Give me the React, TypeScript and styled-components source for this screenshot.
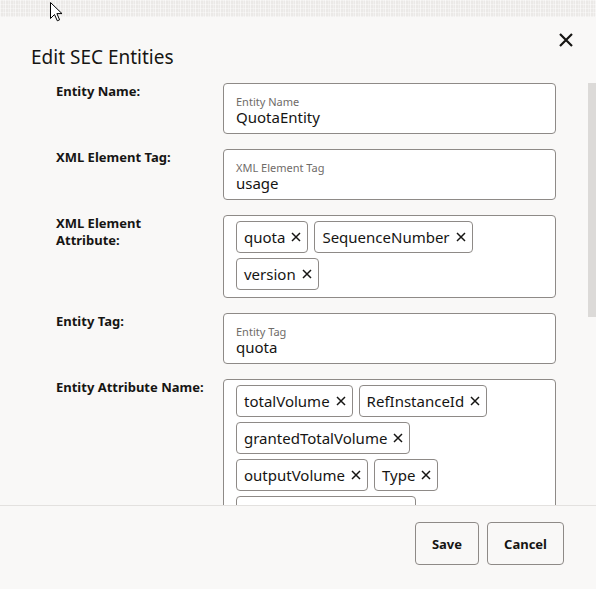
import React from 'react'
import styled, { createGlobalStyle } from 'styled-components'

const GlobalStyle = createGlobalStyle`
  html, body {
    margin: 0;
    padding: 0;
    background: #f9f8f7;
    font-family: "Noto Sans", "Open Sans", sans-serif;
    color: #161513;
  }
`

type Field =
  | { kind: 'text'; label: string; hint: string; value: string }
  | { kind: 'chips'; label: string; chips: string[] }

const fields: Field[] = [
  { kind: 'text', label: 'Entity Name:', hint: 'Entity Name', value: 'QuotaEntity' },
  { kind: 'text', label: 'XML Element Tag:', hint: 'XML Element Tag', value: 'usage' },
  { kind: 'chips', label: 'XML Element Attribute:', chips: ['quota', 'SequenceNumber', 'version'] },
  { kind: 'text', label: 'Entity Tag:', hint: 'Entity Tag', value: 'quota' },
  {
    kind: 'chips',
    label: 'Entity Attribute Name:',
    chips: ['totalVolume', 'RefInstanceId', 'grantedTotalVolume', 'outputVolume', 'Type', 'reservedTotalVolume'],
  },
]

// visible part of the scroll area vs. its full content height
const VIEW_HEIGHT = 422
const CONTENT_HEIGHT = 761

const CloseIcon = () => (
  <svg width="16" height="16" viewBox="0 0 16 16">
    <path d="M2 2 L14 14 M14 2 L2 14" stroke="#161513" strokeWidth="2.2" />
  </svg>
)

const SmallX = () => (
  <svg width="10" height="10" viewBox="0 0 10 10">
    <path d="M1 1 L9 9 M9 1 L1 9" stroke="#161513" strokeWidth="1.5" />
  </svg>
)

const Pointer = () => (
  <svg width="13" height="20" viewBox="0 0 13 20">
    <path
      d="M0.5 0.5 L0.5 16.5 L4.5 12.5 L7.3 18.8 L9.6 17.8 L6.9 11.6 L12 11.6 Z"
      fill="#ffffff"
      stroke="#000000"
      strokeWidth="1"
      strokeLinejoin="round"
    />
  </svg>
)

const App = () => {
  const thumb = Math.round((VIEW_HEIGHT * VIEW_HEIGHT) / CONTENT_HEIGHT)
  return (
    <Page>
      <GlobalStyle />
      <Backdrop>
        <CursorSpot>
          <Pointer />
        </CursorSpot>
      </Backdrop>
      <Dialog>
        <Header>
          <Title>Edit SEC Entities</Title>
          <CloseButton aria-label="Close">
            <CloseIcon />
          </CloseButton>
        </Header>
        <BodyFrame>
          <Body>
            <FormGrid>
              {fields.map((f) => (
                <React.Fragment key={f.label}>
                  <Label>{f.label}</Label>
                  {f.kind === 'text' ? (
                    <InputBox>
                      <Hint>{f.hint}</Hint>
                      <Value>{f.value}</Value>
                    </InputBox>
                  ) : (
                    <ChipBox>
                      {f.chips.map((c) => (
                        <Chip key={c}>
                          <span>{c}</span>
                          <SmallX />
                        </Chip>
                      ))}
                    </ChipBox>
                  )}
                </React.Fragment>
              ))}
            </FormGrid>
          </Body>
          <ScrollThumb style={{ height: thumb }} />
        </BodyFrame>
        <Footer>
          <FooterButton>Save</FooterButton>
          <FooterButton>Cancel</FooterButton>
        </Footer>
      </Dialog>
    </Page>
  )
}

export default App

const Page = styled.div`
  height: 589px;
  display: flex;
  flex-direction: column;
  overflow: hidden;
`

const Backdrop = styled.div`
  position: relative;
  height: 17px;
  flex: 0 0 17px;
  background-color: #ebe9e7;
  background-image: repeating-linear-gradient(
      90deg,
      rgba(255, 255, 255, 0.55) 0 1px,
      transparent 1px 3px,
      rgba(255, 255, 255, 0.3) 3px 4px,
      transparent 4px 5px
    ),
    repeating-linear-gradient(0deg, rgba(255, 255, 255, 0.35) 0 1px, transparent 1px 4px);
`

const CursorSpot = styled.div`
  position: absolute;
  left: 50px;
  top: 2px;
  line-height: 0;
`

const Dialog = styled.div`
  flex: 1;
  display: flex;
  flex-direction: column;
  min-height: 0;
  background: #f9f8f7;
`

const Header = styled.div`
  flex: 0 0 66px;
  box-sizing: border-box;
  display: flex;
  justify-content: space-between;
  align-items: flex-start;
  padding: 7px 14px 0 31px;
`

const Title = styled.h1`
  margin: 19px 0 0;
  font-size: 19px;
  line-height: 28px;
  font-weight: 400;
  color: #161513;
`

const CloseButton = styled.button`
  width: 32px;
  height: 32px;
  display: flex;
  align-items: center;
  justify-content: center;
  padding: 0;
  border: none;
  background: transparent;
`

const BodyFrame = styled.div`
  position: relative;
  flex: 1;
  min-height: 0;
  display: flex;
`

const Body = styled.div`
  flex: 1;
  overflow: hidden;
  padding: 0 40px 0 56px;
`

const ScrollThumb = styled.div`
  position: absolute;
  top: 0;
  right: 0;
  width: 8px;
  background: #dcdad8;
`

const FormGrid = styled.div`
  display: grid;
  grid-template-columns: 167px 1fr;
  row-gap: 15px;
`

const Label = styled.div`
  font-size: 13px;
  line-height: 17px;
  font-weight: 700;
  color: #161513;
  max-width: 150px;
`

const InputBox = styled.div`
  box-sizing: border-box;
  height: 51px;
  padding: 11px 12px 0;
  background: #ffffff;
  border: 1px solid #8e8a87;
  border-radius: 4px;
`

const Hint = styled.div`
  font-size: 11px;
  line-height: 13px;
  color: #6f6b68;
`

const Value = styled.div`
  font-size: 15px;
  line-height: 18px;
  color: #161513;
`

const ChipBox = styled.div`
  box-sizing: border-box;
  display: flex;
  flex-wrap: wrap;
  align-content: flex-start;
  gap: 5px 6px;
  padding: 5px 12px 7px;
  background: #ffffff;
  border: 1px solid #8e8a87;
  border-radius: 4px;
`

const Chip = styled.div`
  box-sizing: border-box;
  height: 32px;
  display: inline-flex;
  align-items: center;
  gap: 6px;
  padding: 0 6px 0 7px;
  border: 1px solid #8e8a87;
  border-radius: 4px;
  background: #ffffff;
  font-size: 15px;
  color: #161513;
`

const Footer = styled.div`
  flex: 0 0 84px;
  box-sizing: border-box;
  display: flex;
  justify-content: flex-end;
  align-items: flex-start;
  gap: 8px;
  padding: 16px 32px 0 0;
  border-top: 1px solid #e3e1df;
`

const FooterButton = styled.button`
  height: 43px;
  padding: 0 16px;
  background: transparent;
  border: 1px solid #8e8a87;
  border-radius: 4px;
  font-family: "Noto Sans", "Open Sans", sans-serif;
  font-size: 13px;
  font-weight: 700;
  color: #161513;
`
